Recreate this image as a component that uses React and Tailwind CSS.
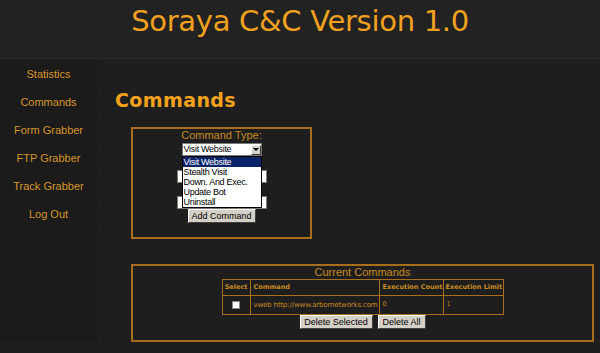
import React from "react";

const NAV = ["Statistics", "Commands", "Form Grabber", "FTP Grabber", "Track Grabber", "Log Out"];
const OPTIONS = ["Visit Website", "Stealth Visit", "Down. And Exec.", "Update Bot", "Uninstall"];

function Btn({ children, className = "" }) {
  return (
    <div
      className={
        "h-[14px] flex items-center justify-center bg-[#d4d0c8] text-black text-[9px] leading-none border border-t-white border-l-white border-r-[#404040] border-b-[#404040] " +
        className
      }
    >
      {children}
    </div>
  );
}

export default function App() {
  return (
    <div className="w-[600px] h-[353px] overflow-hidden bg-[#1e1e1e] font-['Liberation_Sans',sans-serif]">
      {/* header */}
      <div className="h-[59px] bg-[#222222] border-b border-[#2a2a2a] flex justify-center">
        <div className="mt-[5px] text-[29px] leading-[32px] text-[#f2a11f] font-['DejaVu_Sans',sans-serif] tracking-[-0.3px]">
          Soraya C&amp;C Version 1.0
        </div>
      </div>

      <div className="flex">
        {/* sidebar */}
        <div className="w-[97px] shrink-0 bg-[#1b1b1b] pt-[2px]">
          {NAV.map((n) => (
            <div
              key={n}
              className="h-[28px] flex items-center justify-center text-[11px] text-[#d9962a] border-b border-[#1f1f1f]"
            >
              {n}
            </div>
          ))}
        </div>

        {/* main */}
        <div className="flex-1 pl-[18px] pt-[30px]">
          <div className="text-[19px] leading-[22px] font-bold text-[#f3a21c] font-['DejaVu_Sans',sans-serif] tracking-[0.4px]">
            Commands
          </div>

          {/* add command box */}
          <div className="ml-[16px] mt-[16px] w-[181px] h-[112px] border-2 border-[#a86e1c] flex flex-col items-center">
            <div className="text-[11px] leading-[13px] text-[#c98b22]">Command Type:</div>
            <div className="relative mt-[1px]">
              <div className="w-[80px] h-[13px] bg-white border border-[#7a7a7a] flex items-center justify-between pl-[1px]">
                <span className="text-[9px] leading-none text-black tracking-[-0.3px]">Visit Website</span>
                <span className="w-[10px] h-[10px] bg-[#d4d0c8] border border-t-white border-l-white border-r-[#404040] border-b-[#404040] flex items-center justify-center">
                  <span className="w-0 h-0 border-l-[3px] border-r-[3px] border-t-[3px] border-l-transparent border-r-transparent border-t-black" />
                </span>
              </div>
              {/* open list */}
              <div className="absolute left-0 top-[13px] w-[80px] bg-white border border-black z-10">
                {OPTIONS.map((o, i) => (
                  <div
                    key={o}
                    className={
                      "h-[10px] flex items-center pl-[1px] text-[9px] leading-none tracking-[-0.3px] " +
                      (i === 0 ? "bg-[#0a246a] text-white" : "text-black")
                    }
                  >
                    {o}
                  </div>
                ))}
              </div>
            </div>
            <div className="mt-[14px] w-[90px] h-[13px] bg-white border border-[#7a7a7a]" />
            <div className="mt-[13px] w-[90px] h-[13px] bg-white border border-[#7a7a7a]" />
            <Btn className="w-[68px]">Add Command</Btn>
          </div>

          {/* current commands */}
          <div className="ml-[16px] mt-[25px] w-[463px] h-[78px] border-2 border-[#a86e1c] flex flex-col items-center">
            <div className="text-[11px] leading-[13px] text-[#c98b22]">Current Commands</div>
            <div className="border border-[#a86e1c] flex flex-col text-[6.5px] font-['DejaVu_Sans',sans-serif] text-[#c98b22] whitespace-nowrap">
              <div className="flex h-[15px] font-bold">
                <div className="w-[28px] border-r border-[#a86e1c] flex items-center justify-center">Select</div>
                <div className="w-[129px] border-r border-[#a86e1c] flex items-center pl-[3px]">Command</div>
                <div className="w-[64px] border-r border-[#a86e1c] flex items-center pl-[3px]">Execution Count</div>
                <div className="w-[59px] flex items-center pl-[2px]">Execution Limit</div>
              </div>
              <div className="flex h-[19px] border-t border-[#a86e1c]">
                <div className="w-[28px] border-r border-[#a86e1c] flex items-center justify-center">
                  <div className="w-[8px] h-[8px] bg-white border border-[#888]" />
                </div>
                <div className="w-[129px] border-r border-[#a86e1c] flex items-center pl-[3px] text-[7px] tracking-[-0.15px]">
                  vweb http://www.arbornetworks.com
                </div>
                <div className="w-[64px] border-r border-[#a86e1c] flex items-center pl-[3px]">0</div>
                <div className="w-[59px] flex items-center pl-[3px]">1</div>
              </div>
            </div>
            <div className="flex gap-[5px]">
              <Btn className="w-[73px]">Delete Selected</Btn>
              <Btn className="w-[48px]">Delete All</Btn>
            </div>
          </div>
        </div>
      </div>
    </div>
  );
}
